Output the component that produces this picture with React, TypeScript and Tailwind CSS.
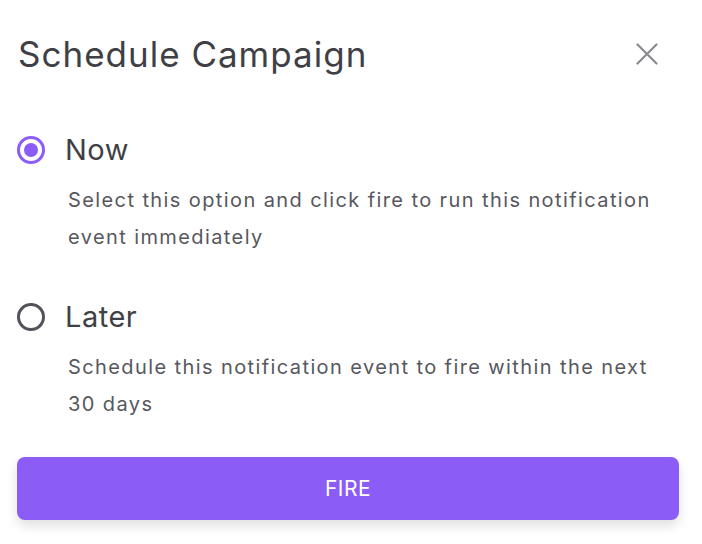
import React, { useState } from "react";

function Radio({ checked }: { checked: boolean }) {
  return (
    <span
      className={
        "flex h-[28px] w-[28px] shrink-0 items-center justify-center rounded-full border-[3px] " +
        (checked ? "border-[#8b5cf6]" : "border-[#52525b]")
      }
    >
      {checked && <span className="h-[14px] w-[14px] rounded-full bg-[#8b5cf6]" />}
    </span>
  );
}

export default function App() {
  const [value, setValue] = useState<"now" | "later">("now");
  const options = [
    {
      key: "now" as const,
      label: "Now",
      desc: "Select this option and click fire to run this notification event immediately",
    },
    {
      key: "later" as const,
      label: "Later",
      desc: "Schedule this notification event to fire within the next 30 days",
    },
  ];
  return (
    <div
      className="w-[702px] h-[544px] bg-white pl-[17px] pr-[23px] pt-[30px]"
      style={{ fontFamily: "Inter, 'Noto Sans', sans-serif" }}
    >
      <div className="flex items-center justify-between">
        <h1 className="text-[35px] leading-[48px] text-[#3f3f46] tracking-[1px] pl-[1px]">
          Schedule Campaign
        </h1>
        <button className="mr-[21px] text-[#8a8a8f]" aria-label="Close">
          <svg width="22" height="22" viewBox="0 0 22 22" fill="none" stroke="currentColor" strokeWidth="2.2" strokeLinecap="round">
            <path d="M1.5 1.5L20.5 20.5M20.5 1.5L1.5 20.5" />
          </svg>
        </button>
      </div>
      <div className="mt-[53px] flex flex-col gap-[42px]">
        {options.map((o) => (
          <div key={o.key} className="flex flex-col">
            <button className="flex items-center gap-[20px] text-left" onClick={() => setValue(o.key)}>
              <Radio checked={value === o.key} />
              <span className="text-[29px] leading-[38px] tracking-[0.5px] text-[#3f3f46]">{o.label}</span>
            </button>
            <p className="mt-[13px] pl-[51px] pr-[10px] text-[20px] leading-[37px] tracking-[1.4px] text-[#57575e]">
              {o.desc}
            </p>
          </div>
        ))}
      </div>
      <button className="mt-[34px] h-[63px] w-full rounded-[8px] bg-[#8b5cf6] text-[21px] tracking-[0.5px] text-white shadow-[0_6px_12px_rgba(0,0,0,0.12)]">
        FIRE
      </button>
    </div>
  );
}
